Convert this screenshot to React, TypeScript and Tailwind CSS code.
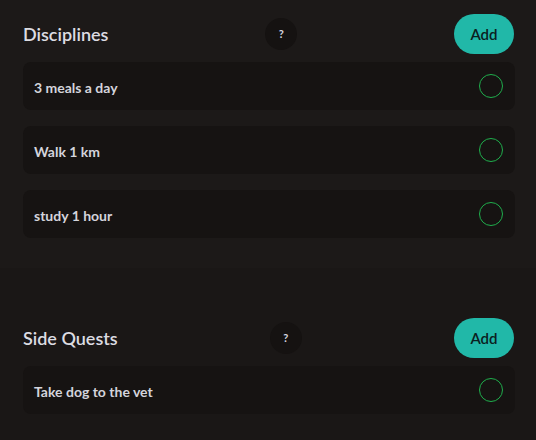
import React from 'react';

interface Task {
  id: number;
  title: string;
}

const disciplines: Task[] = [
  { id: 1, title: '3 meals a day' },
  { id: 2, title: 'Walk 1 km' },
  { id: 3, title: 'study 1 hour' },
];

const sideQuests: Task[] = [{ id: 4, title: 'Take dog to the vet' }];

const TaskRow = ({ title }: { title: string }) => (
  <div className="flex h-12 items-center justify-between rounded-lg bg-[#161312] pl-[11px] pr-3">
    <span className="pt-0.5 text-[14px] font-bold text-[#d4d4dc]">{title}</span>
    <button
      className="h-6 w-6 rounded-full border border-[#1fae4c] bg-transparent"
      aria-label={`Complete ${title}`}
    />
  </div>
);

const Section = ({ title, tasks, className = '' }: { title: string; tasks: Task[]; className?: string }) => (
  <section className={`px-[23px] pr-[21px] ${className}`}>
    <div className="flex h-10 items-center justify-between">
      <h2 className="text-[18px] font-semibold text-[#dcdce2]">{title}</h2>
      <button className="flex h-8 w-8 items-center justify-center rounded-full bg-[#151211] text-[11px] font-bold text-[#d8d8e0]">
        ?
      </button>
      <button className="mr-px h-10 w-[60px] rounded-full bg-[#21b8a8] text-[15px] font-semibold text-[#0b2020]">
        Add
      </button>
    </div>
    <div className="mt-2 flex flex-col gap-4">
      {tasks.map((t) => (
        <TaskRow key={t.id} title={t.title} />
      ))}
    </div>
  </section>
);

export default function App() {
  return (
    <div
      className="h-[440px] w-[536px] overflow-hidden bg-[#1a1716]"
      style={{ fontFamily: 'Lato, "Open Sans", sans-serif' }}
    >
      <div className="bg-[#1c1918] pt-[14px] pb-[30px]">
        <Section title="Disciplines" tasks={disciplines} />
      </div>
      <Section title="Side Quests" tasks={sideQuests} className="mt-[50px]" />
    </div>
  );
}
